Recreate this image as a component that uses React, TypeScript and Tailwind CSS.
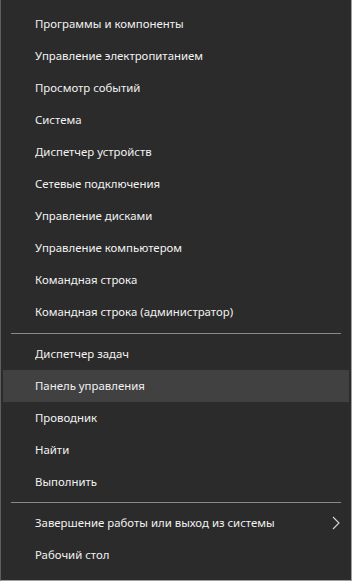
const groups: string[][] = [
  [
    "Программы и компоненты",
    "Управление электропитанием",
    "Просмотр событий",
    "Система",
    "Диспетчер устройств",
    "Сетевые подключения",
    "Управление дисками",
    "Управление компьютером",
    "Командная строка",
    "Командная строка (администратор)",
  ],
  ["Диспетчер задач", "Панель управления", "Проводник", "Найти", "Выполнить"],
  ["Завершение работы или выход из системы", "Рабочий стол"],
];

function Item({ label, active, submenu }: { label: string; active?: boolean; submenu?: boolean }) {
  return (
    <div
      className={`h-8 mx-[2px] flex items-center pl-[32px] pr-[9px] text-[11.4px] text-[#f2f2f2] ${
        active ? "bg-[#414141]" : ""
      }`}
    >
      <span className="flex-1 truncate">{label}</span>
      {submenu && (
        <svg width="8" height="14" viewBox="0 0 8 14">
          <path d="M1 1l6 6-6 6" fill="none" stroke="#d8d8d8" strokeWidth="1.1" />
        </svg>
      )}
    </div>
  );
}

export default function App() {
  return (
    <div
      className="w-[352px] h-[581px] bg-[#2b2b2b] border-l border-l-[#5e5e5e] border-r border-r-[#a0a0a0] border-b border-b-[#a0a0a0] pt-2 flex flex-col"
      style={{ fontFamily: '"Noto Sans", "Open Sans", sans-serif' }}
    >
      {groups.map((g, gi) => (
        <div key={gi}>
          {gi === 1 && (
            <div className="h-[10px] flex items-center px-[10px]">
              <div className="h-px w-full bg-[#8a8a8a]" />
            </div>
          )}
          {gi === 2 && (
            <div className="h-[9px] flex items-center px-[10px]">
              <div className="h-px w-full bg-[#8a8a8a]" />
            </div>
          )}
          {g.map((label) => (
            <Item
              key={label}
              label={label}
              active={label === "Панель управления"}
              submenu={label.startsWith("Завершение")}
            />
          ))}
        </div>
      ))}
    </div>
  );
}
